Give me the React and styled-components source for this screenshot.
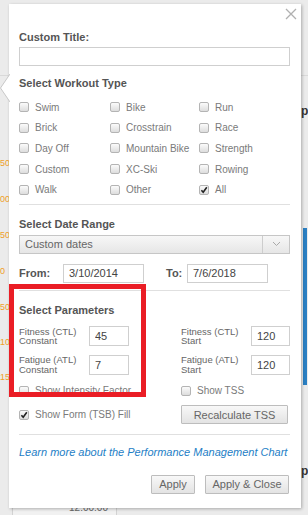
import React from "react";
import styled, { createGlobalStyle } from "styled-components";

const GlobalStyle = createGlobalStyle`
  html, body {
    margin: 0;
    padding: 0;
  }
  body {
    background: #ebebeb;
    font-family: "Liberation Sans", Arial, sans-serif;
    overflow: hidden;
  }
`;

const Page = styled.div`
  position: relative;
  width: 308px;
  height: 515px;
  overflow: hidden;
  background: #ebebeb;
  padding-top: 4px;
  box-sizing: border-box;
`;

/* things of the chart page behind the popup */
const AxisLabel = styled.span`
  position: absolute;
  top: ${(p) => p.$y - 6}px;
  left: 0;
  font-size: 9px;
  line-height: 12px;
  color: #f0a028;
`;

const BlueBar = styled.div`
  position: absolute;
  left: 303px;
  top: 228px;
  width: 4px;
  height: 157px;
  background: #2a7fc2;
`;

const EdgeText = styled.span`
  position: absolute;
  left: 301px;
  top: ${(p) => p.$y}px;
  font-size: 12px;
  font-weight: bold;
  color: #333;
`;

const HLine = styled.div`
  position: absolute;
  top: ${(p) => p.$y}px;
  left: 0;
  width: 308px;
  height: 1px;
  background: #d9d9d9;
`;

const TimeCell = styled.div`
  position: absolute;
  left: 12px;
  top: 499px;
  width: 105px;
  height: 22px;
  box-sizing: border-box;
  border: 1px solid #d2d2d2;
  background: #f1f1f1;
  font-size: 10px;
  line-height: 12px;
  color: #666;
  text-align: right;
  padding: 2px 8px 0 0;
`;

const Pointer = styled.svg`
  position: absolute;
  left: 0;
  top: 74px;
  z-index: 3;
`;

/* popup */
const Modal = styled.div`
  position: relative;
  z-index: 2;
  margin-left: 9px;
  width: 292px;
  height: 504px;
  box-sizing: border-box;
  background: #fff;
  box-shadow: 1px 1px 3px rgba(0, 0, 0, 0.28);
  padding: 26px 11px 0 10px;
`;

const Close = styled.svg`
  position: absolute;
  top: 4px;
  right: 4px;
`;

const Heading = styled.div`
  font-size: 11px;
  font-weight: bold;
  line-height: 14px;
  color: #555;
  margin-top: ${(p) => p.$mt || 0}px;
`;

const TextInput = styled.input`
  display: block;
  box-sizing: border-box;
  width: ${(p) => p.$w || 271}px;
  height: ${(p) => p.$h || 19}px;
  margin: ${(p) => p.$mt || 0}px 0 0 0;
  border: 1px solid #cfcfcf;
  padding: 0 0 0 5px;
  font-family: inherit;
  font-size: 11px;
  color: #444;
  background: #fff;
  outline: none;
`;

const WorkoutGrid = styled.div`
  display: grid;
  grid-template-columns: 91px 89px 1fr;
  grid-auto-rows: 20.6px;
  margin-top: 7px;
`;

const CheckItem = styled.label`
  display: flex;
  align-items: center;
  gap: 6px;
  font-size: 10px;
  color: #7a7a7a;
  white-space: nowrap;
`;

const BoxShape = styled.span`
  position: relative;
  flex: none;
  width: 10px;
  height: 10px;
  box-sizing: border-box;
  border: 1px solid #b4b4b4;
  border-radius: 2px;
  background: linear-gradient(#fbfbfb, #dddddd);
  svg {
    position: absolute;
    left: 0;
    top: 0;
  }
`;

const Divider = styled.div`
  height: 1px;
  background: #e0e0e0;
  margin-top: ${(p) => p.$mt}px;
`;

const Select = styled.div`
  display: flex;
  height: 19px;
  margin-top: 4px;
  box-sizing: border-box;
  border: 1px solid #c6c6c6;
  background: linear-gradient(#f7f7f7, #e6e6e6);
`;

const SelectText = styled.div`
  flex: 1;
  padding-left: 5px;
  font-size: 11px;
  line-height: 17px;
  color: #666;
`;

const SelectArrow = styled.div`
  width: 26px;
  border-left: 1px solid #cdcdcd;
  display: flex;
  align-items: center;
  justify-content: center;
`;

const DateRow = styled.div`
  display: flex;
  align-items: center;
  margin-top: 10px;
`;

const DateLabel = styled.span`
  width: ${(p) => p.$w}px;
  margin-left: ${(p) => p.$ml || 0}px;
  font-size: 11px;
  font-weight: bold;
  color: #555;
`;

const TwoCols = styled.div`
  display: grid;
  grid-template-columns: 162px 1fr;
  align-items: center;
  row-gap: ${(p) => p.$gap}px;
  margin-top: ${(p) => p.$mt}px;
`;

const ParamCell = styled.div`
  display: flex;
  align-items: center;
`;

const ParamLabel = styled.div`
  width: 70px;
  font-size: 9.5px;
  line-height: 9.5px;
  color: #666;
`;

const Button = styled.button`
  box-sizing: border-box;
  width: ${(p) => p.$w}px;
  height: ${(p) => p.$h || 19}px;
  padding: 0;
  border: 1px solid #bdbdbd;
  border-radius: 1px;
  background: linear-gradient(#f8f8f8, #e3e3e3);
  font-family: inherit;
  font-size: 11px;
  color: #666;
`;

const Link = styled.a`
  display: block;
  margin-top: 10px;
  font-size: 11px;
  line-height: 14px;
  font-style: italic;
  color: #1e80c6;
  text-decoration: none;
  white-space: nowrap;
`;

const Footer = styled.div`
  display: flex;
  justify-content: flex-end;
  gap: 10px;
  margin: 15.5px 1px 0 0;
`;

const Highlight = styled.div`
  position: absolute;
  left: 0;
  top: 280px;
  width: 137px;
  height: 113px;
  box-sizing: border-box;
  border: 5px solid #ea1d25;
  pointer-events: none;
`;

const Box = ({ checked }) => (
  <BoxShape>
    {checked && (
      <svg width="8" height="8" viewBox="0 0 8 8">
        <path d="M1.4 4.2 L3.2 6.2 L6.8 1.2" fill="none" stroke="#222" strokeWidth="1.6" />
      </svg>
    )}
  </BoxShape>
);

const Check = ({ label, checked }) => (
  <CheckItem>
    <Box checked={checked} />
    {label}
  </CheckItem>
);

const workouts = [
  "Swim", "Bike", "Run",
  "Brick", "Crosstrain", "Race",
  "Day Off", "Mountain Bike", "Strength",
  "Custom", "XC-Ski", "Rowing",
  "Walk", "Other", "All",
];

const axis = [
  [163, "50"], [199, "00"], [235, "50"], [271, "0"],
  [307, "50"], [342, "10"], [377, "15"],
];

const App = () => {
  return (
    <Page>
      <GlobalStyle />
      <HLine $y={75} />
      {axis.map(([y, t]) => (
        <AxisLabel key={y} $y={y}>{t}</AxisLabel>
      ))}
      <BlueBar />
      <EdgeText $y={104}>p</EdgeText>
      <EdgeText $y={464}>p</EdgeText>
      <TimeCell>12:00:00</TimeCell>
      <Pointer width="10" height="28" viewBox="0 0 10 28">
        <polygon points="10,0 0.5,14 10,28" fill="#fff" />
        <polyline points="10,0 0.5,14 10,28" fill="none" stroke="#c8c8c8" strokeWidth="1" />
      </Pointer>

      <Modal>
        <Close width="12" height="12" viewBox="0 0 12 12">
          <path d="M1 1 L11 11 M11 1 L1 11" stroke="#b0b0b0" strokeWidth="1.3" />
        </Close>

        <Heading>Custom Title:</Heading>
        <TextInput $mt={3} readOnly />

        <Heading $mt={10}>Select Workout Type</Heading>
        <WorkoutGrid>
          {workouts.map((w) => (
            <Check key={w} label={w} checked={w === "All"} />
          ))}
        </WorkoutGrid>
        <Divider $mt={4.5} />

        <Heading $mt={11.5}>Select Date Range</Heading>
        <Select>
          <SelectText>Custom dates</SelectText>
          <SelectArrow>
            <svg width="9" height="6" viewBox="0 0 9 6">
              <path d="M1 1 L4.5 4.5 L8 1" fill="none" stroke="#aaa" strokeWidth="1" />
            </svg>
          </SelectArrow>
        </Select>
        <DateRow>
          <DateLabel $w={44}>From:</DateLabel>
          <TextInput $w={81} defaultValue="3/10/2014" readOnly />
          <DateLabel $w={21} $ml={22}>To:</DateLabel>
          <TextInput $w={81} defaultValue="7/6/2018" readOnly />
        </DateRow>
        <Divider $mt={7.5} />

        <Heading $mt={12}>Select Parameters</Heading>
        <TwoCols $gap={8.5} $mt={8.7}>
          <ParamCell>
            <ParamLabel>Fitness (CTL)<br />Constant</ParamLabel>
            <TextInput $w={40} $h={20} defaultValue="45" readOnly />
          </ParamCell>
          <ParamCell>
            <ParamLabel>Fitness (CTL)<br />Start</ParamLabel>
            <TextInput $w={39} $h={20} defaultValue="120" readOnly />
          </ParamCell>
          <ParamCell>
            <ParamLabel>Fatigue (ATL)<br />Constant</ParamLabel>
            <TextInput $w={40} $h={20} defaultValue="7" readOnly />
          </ParamCell>
          <ParamCell>
            <ParamLabel>Fatigue (ATL)<br />Start</ParamLabel>
            <TextInput $w={39} $h={20} defaultValue="120" readOnly />
          </ParamCell>
        </TwoCols>

        <TwoCols $gap={8.7} $mt={10.7}>
          <Check label="Show Intensity Factor" />
          <Check label="Show TSS" />
          <Check label="Show Form (TSB) Fill" checked />
          <Button $w={107}>Recalculate TSS</Button>
        </TwoCols>
        <Divider $mt={10} />

        <Link>Learn more about the Performance Management Chart</Link>

        <Footer>
          <Button $w={44}>Apply</Button>
          <Button $w={84}>Apply &amp; Close</Button>
        </Footer>

        <Highlight />
      </Modal>
    </Page>
  );
};

export default App;
